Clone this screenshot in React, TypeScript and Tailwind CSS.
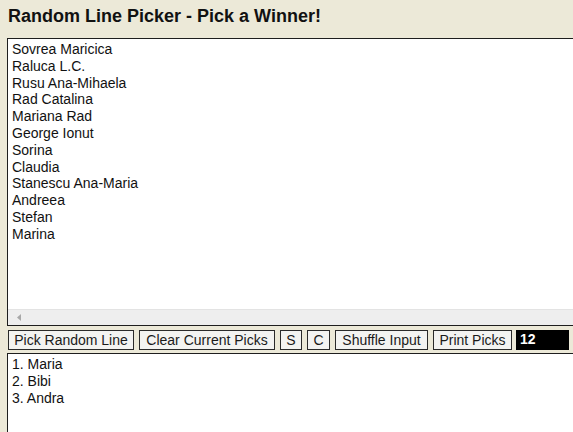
import React from 'react'

const names = [
  'Sovrea Maricica',
  'Raluca L.C.',
  'Rusu Ana-Mihaela',
  'Rad Catalina',
  'Mariana Rad',
  'George Ionut',
  'Sorina',
  'Claudia',
  'Stanescu Ana-Maria',
  'Andreea',
  'Stefan',
  'Marina',
]

const picks = ['1. Maria', '2. Bibi', '3. Andra']

const buttons = [
  { label: 'Pick Random Line', w: 'w-[126px]' },
  { label: 'Clear Current Picks', w: 'w-[136px]' },
  { label: 'S', w: 'w-[22px]' },
  { label: 'C', w: 'w-[23px]' },
  { label: 'Shuffle Input', w: 'w-[93px]' },
  { label: 'Print Picks', w: 'w-[79px]' },
]

export default function App() {
  return (
    <div className="h-[432px] w-[573px] overflow-hidden bg-[#ECE9D8] font-['Liberation_Sans',Arial,sans-serif] text-black">
      <h1 className="pl-[8px] pt-[6px] text-[18px] font-bold leading-[21px] text-[#111]">
        Random Line Picker - Pick a Winner!
      </h1>

      {/* Input list */}
      <div className="ml-[7px] mt-[11px] flex h-[288px] w-[600px] flex-col border border-[#1e1e1e] bg-white">
        <div className="flex-1 pl-[4px] pt-[2px] text-[14px] leading-[16.8px] text-[#111]">
          {names.map((n) => (
            <div key={n}>{n}</div>
          ))}
        </div>
        <div className="flex h-[16px] items-center border-t border-[#e3e3e3] bg-[#eeeeee] pl-[9px]">
          <svg width="4" height="7" viewBox="0 0 4 7">
            <path d="M4 0 L0 3.5 L4 7 Z" fill="#a8a8a8" />
          </svg>
        </div>
      </div>

      {/* Buttons */}
      <div className="ml-[8px] mt-[4px] flex h-[20px] items-stretch gap-[5px]">
        {buttons.map((b) => (
          <button
            key={b.label}
            className={`${b.w} border border-[#2a2a2a] bg-[#f3f3f1] text-center text-[14px] leading-[18px] text-[#1a1a1a]`}
          >
            {b.label}
          </button>
        ))}
        <div className="-ml-[1px] w-[53px] bg-black pl-[4px] text-[14px] font-bold leading-[19px] text-white">12</div>
      </div>

      {/* Picks */}
      <div className="ml-[7px] mt-[3px] h-[120px] w-[600px] border border-[#1e1e1e] bg-white pl-[4px] pt-[2px] text-[14px] leading-[16.8px] text-[#111]">
        {picks.map((p) => (
          <div key={p}>{p}</div>
        ))}
      </div>
    </div>
  )
}
